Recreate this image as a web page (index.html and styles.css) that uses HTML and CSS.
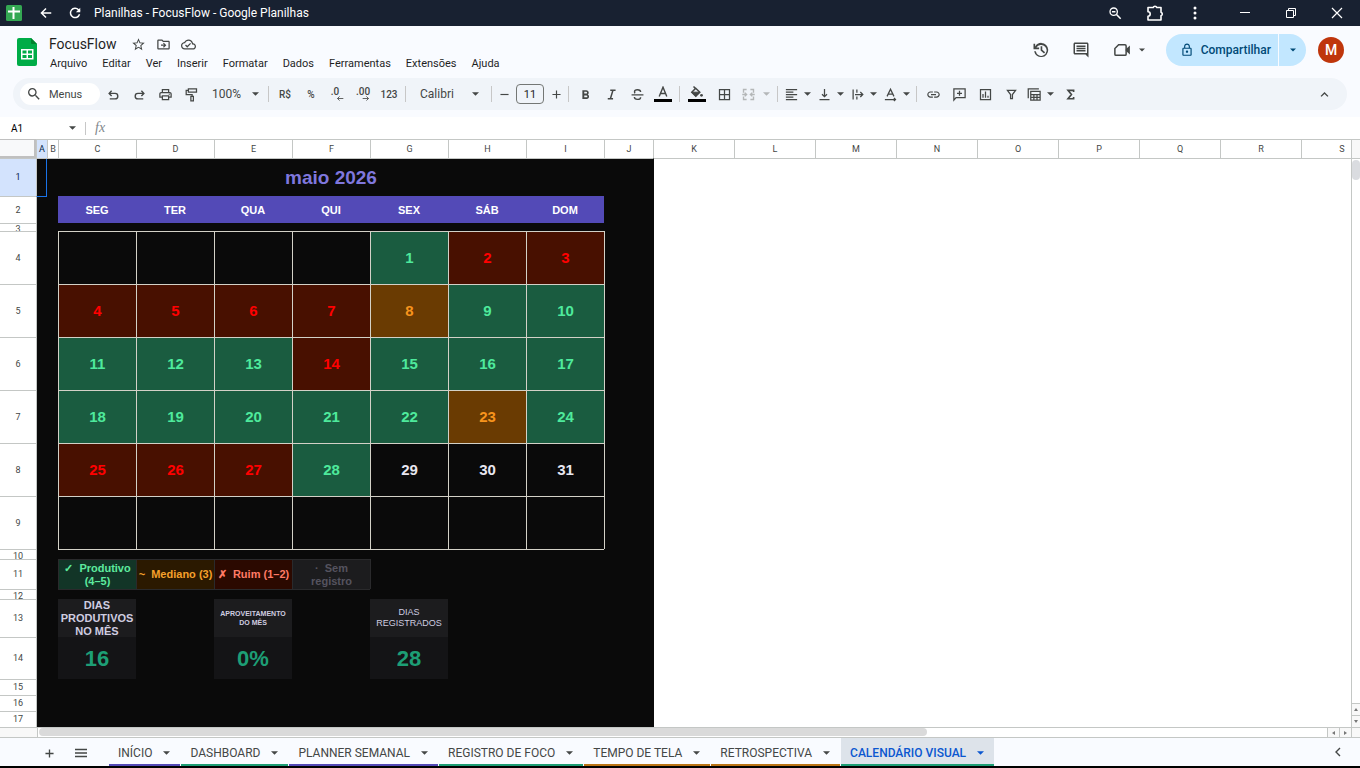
FILE: index.html
```html
<!DOCTYPE html>
<html lang="pt-BR">
<head>
<meta charset="utf-8">
<title>Planilhas - FocusFlow - Google Planilhas</title>
<link rel="stylesheet" href="styles.css">
</head>
<body>
<svg class="defs" aria-hidden="true">
  <symbol id="caret" viewBox="0 0 8 4"><path d="M0 0h8L4 4z"/></symbol>
</svg>

<header class="titlebar">
  <svg class="app-icon" viewBox="0 0 16 16"><rect width="16" height="16" rx="1.5" fill="#34a853"/><path d="M7.500 2v12M2 6.500h12" stroke="#fff" stroke-width="2"/></svg>
  <button class="win-btn" aria-label="Voltar"><svg viewBox="0 0 16 16" class="line"><path d="M14 8H3M8 2.800 2.800 8 8 13.200" stroke-width="1.700"/></svg></button>
  <button class="win-btn" aria-label="Recarregar"><svg viewBox="0 0 16 16" class="line"><path d="M13.200 9.500A5.300 5.300 0 1 1 12 4.300L13.500 6" stroke-width="1.700"/><path d="M14 2v5H9z" fill="currentColor" stroke="none"/></svg></button>
  <span class="win-title">Planilhas - FocusFlow - Google Planilhas</span>
  <div class="win-tools">
    <button class="win-tool w-zoom" aria-label="Zoom"><svg viewBox="0 0 16 16" class="line"><circle cx="6.500" cy="6.500" r="4.200" stroke-width="1.500"/><path d="M9.700 9.700 14.500 14.500M4.500 6.500h4" stroke-width="1.800"/></svg></button>
    <button class="win-tool w-ext" aria-label="Extensões"><svg viewBox="0 0 18 18" class="line"><path d="M2 3.500h5.200a1.900 1.900 0 0 1 3.600 0H15v4.700a1.900 1.900 0 0 1 0 3.600V16H2v-3.800a2.200 2.200 0 0 0 0-4.400z" stroke-width="1.600" stroke-linejoin="round"/></svg></button>
    <button class="win-tool w-more" aria-label="Mais"><svg viewBox="0 0 16 16" fill="currentColor"><circle cx="8" cy="3" r="1.500"/><circle cx="8" cy="8" r="1.500"/><circle cx="8" cy="13" r="1.500"/></svg></button>
    <button class="win-tool w-sys" aria-label="Minimizar"><svg viewBox="0 0 16 16" class="line"><path d="M3 7.500h10" stroke-width="1"/></svg></button>
    <button class="win-tool w-sys" aria-label="Restaurar"><svg viewBox="0 0 16 16" class="line"><path d="M3.500 5.500h7v7h-7zM5.500 5.500v-2h7v7h-2" stroke-width="1"/></svg></button>
    <button class="win-tool w-sys" aria-label="Fechar"><svg viewBox="0 0 16 16" class="line"><path d="M3 3l10 10M13 3 3 13" stroke-width="1.200"/></svg></button>
  </div>
</header>

<section class="doc-header">
  <svg class="doc-logo" viewBox="0 0 20 28"><path d="M2 0h12l6 6v20a2 2 0 0 1-2 2H2a2 2 0 0 1-2-2V2a2 2 0 0 1 2-2z" fill="#00ac47"/><path d="M14 0l6 6h-5a1 1 0 0 1-1-1z" fill="#00832d"/><path d="M4 11h12.500v10.500H4z" fill="#fff"/><path d="M5.500 12.500h4v3h-4zM11 12.500h4v3h-4zM5.500 17h4v3h-4zM11 17h4v3h-4z" fill="#00ac47"/></svg>
  <div class="doc-main">
    <div class="doc-title-row">
      <h1 class="doc-title">FocusFlow</h1>
      <button class="mini" aria-label="Com estrela"><svg viewBox="0 0 24 24" fill="currentColor"><path d="M22 9.240l-7.190-.62L12 2 9.190 8.630 2 9.240l5.460 4.730L5.820 21 12 17.270 18.180 21l-1.630-7.030L22 9.240zM12 15.400l-3.760 2.270 1-4.280-3.320-2.880 4.380-.38L12 6.100l1.710 4.040 4.380.38-3.320 2.880 1 4.280L12 15.400z"/></svg></button>
      <button class="mini" aria-label="Mover"><svg viewBox="0 0 24 24" fill="currentColor"><path d="M20 6h-8l-2-2H4c-1.100 0-2 .9-2 2v12c0 1.100.9 2 2 2h16c1.100 0 2-.9 2-2V8c0-1.100-.9-2-2-2zm0 12H4V6h5.200l2 2H20v10zm-7.500-9-1.300 1.300 1.800 1.700H8v2h5l-1.800 1.700 1.300 1.300 4-4z"/></svg></button>
      <button class="mini" aria-label="Salvo no Drive"><svg viewBox="0 0 24 24" fill="currentColor"><path d="M19.350 10.040C18.670 6.590 15.640 4 12 4 9.110 4 6.600 5.640 5.350 8.040 2.340 8.360 0 10.910 0 14c0 3.310 2.690 6 6 6h13c2.760 0 5-2.240 5-5 0-2.640-2.050-4.780-4.650-4.960zM19 18H6c-2.210 0-4-1.790-4-4 0-2.050 1.530-3.760 3.560-3.970l1.070-.11.500-.95C8.080 7.140 9.940 6 12 6c2.620 0 4.880 1.860 5.390 4.430l.3 1.500 1.530.11c1.560.1 2.780 1.410 2.780 2.960 0 1.650-1.350 3-3 3zm-9-3.820-2.090-2.090L6.500 13.500 10 17l6.010-6.010-1.410-1.410z"/></svg></button>
    </div>
    <nav class="menus">
      <button>Arquivo</button><button>Editar</button><button>Ver</button><button>Inserir</button><button>Formatar</button><button>Dados</button><button>Ferramentas</button><button>Extensões</button><button>Ajuda</button>
    </nav>
  </div>
  <div class="doc-actions">
    <button class="act" aria-label="Histórico"><svg viewBox="0 0 24 24" fill="currentColor"><path d="M12.500 2.500A9.500 9.500 0 0 0 4.200 7.300V3.500H2V11h7.500V8.800H5.900a7.300 7.300 0 1 1-.9 5H2.800A9.500 9.500 0 1 0 12.500 2.500zM11.500 7v5.500l4.500 4 1.500-1.600-3.800-3.400V7z"/></svg></button>
    <button class="act" aria-label="Comentários"><svg viewBox="0 0 24 24" fill="currentColor"><path d="M22 4c0-1.100-.9-2-2-2H4c-1.100 0-2 .9-2 2v12c0 1.100.9 2 2 2h14l4 4V4zm-2 12H4V4h16v12zM6 12h12v2H6zm0-3h12v2H6zm0-3h12v2H6z"/></svg></button>
    <button class="act act-meet" aria-label="Reunião"><svg viewBox="0 0 24 24" class="line"><path d="M7.500 5H16a1.500 1.500 0 0 1 1.500 1.500v11A1.500 1.500 0 0 1 16 19H4a1.500 1.500 0 0 1-1.500-1.500V10z" stroke-width="2"/><path d="M17 11l5.500-5v12L17 13z" fill="currentColor" stroke="none"/></svg><svg class="caret"><use href="#caret"/></svg></button>
    <div class="share">
      <button class="share-main"><svg viewBox="0 0 24 24" fill="currentColor"><path d="M18 8h-1V6c0-2.760-2.240-5-5-5S7 3.240 7 6v2H6c-1.100 0-2 .9-2 2v10c0 1.100.9 2 2 2h12c1.100 0 2-.9 2-2V10c0-1.100-.9-2-2-2zM9 6c0-1.660 1.340-3 3-3s3 1.340 3 3v2H9V6zm9 14H6V10h12v10zm-6-3c1.100 0 2-.9 2-2s-.9-2-2-2-2 .9-2 2 .9 2 2 2z"/></svg>Compartilhar</button>
      <button class="share-more" aria-label="Opções de compartilhamento"><svg class="caret"><use href="#caret"/></svg></button>
    </div>
    <button class="avatar">M</button>
  </div>
</section>

<section class="toolbar" role="toolbar">
  <button class="search-menus"><svg viewBox="0 0 24 24" fill="currentColor"><path d="M15.500 14h-.79l-.28-.27A6.470 6.470 0 0 0 16 9.500 6.500 6.500 0 1 0 9.500 16c1.610 0 3.090-.59 4.230-1.570l.27.28v.79l5 4.990L20.490 19l-4.990-5zm-6 0C7.010 14 5 11.990 5 9.500S7.010 5 9.500 5 14 7.010 14 9.500 11.990 14 9.500 14z"/></svg>Menus</button>
  <button class="tb" aria-label="Desfazer"><svg viewBox="0 0 24 24" class="line"><path d="M9 6 5 10.200 9 14.400M5 10.200h9.500a4.300 4.300 0 0 1 0 8.800H6" stroke-width="2.200"/></svg></button>
  <button class="tb" aria-label="Refazer"><svg viewBox="0 0 24 24" class="line"><path d="M15 6l4 4.200-4 4.200M19 10.200H9.500a4.300 4.300 0 0 0 0 8.800H18" stroke-width="2.200"/></svg></button>
  <button class="tb" aria-label="Imprimir"><svg viewBox="0 0 24 24" fill="currentColor"><path d="M19 8h-1V3H6v5H5c-1.660 0-3 1.340-3 3v6h4v4h12v-4h4v-6c0-1.660-1.340-3-3-3zM8 5h8v3H8V5zm8 14H8v-4h8v4zm2-4v-2H6v2H4v-4c0-.55.45-1 1-1h14c.55 0 1 .45 1 1v4h-2z"/><circle cx="18" cy="11.500" r="1"/></svg></button>
  <button class="tb" aria-label="Pintar formatação"><svg viewBox="0 0 24 24" class="line"><path d="M7 3h13v5H7zM7 5.500H3.500V12H13v3" stroke-width="2"/><path d="M11 15h4v7h-4z" stroke-width="2"/></svg></button>
  <button class="tb-zoom">100%<svg class="caret"><use href="#caret"/></svg></button>
  <i class="sep"></i>
  <button class="tb tb-text">R$</button>
  <button class="tb tb-text">%</button>
  <button class="tb tb-dec dec-less" aria-label="Diminuir casas decimais"><span>.0</span><svg viewBox="0 0 8 6" class="line"><path d="M8 3H1M3.500.5 1 3l2.500 2.500"/></svg></button>
  <button class="tb tb-dec" aria-label="Aumentar casas decimais"><span>.00</span><svg viewBox="0 0 8 6" class="line"><path d="M0 3h7M4.500.5 7 3 4.500 5.500"/></svg></button>
  <button class="tb tb-text">123</button>
  <i class="sep"></i>
  <button class="tb-font">Calibri<svg class="caret"><use href="#caret"/></svg></button>
  <i class="sep"></i>
  <button class="tb-step" aria-label="Diminuir fonte"><svg viewBox="0 0 10 10" class="line"><path d="M.5 5h9" stroke-width="1.300"/></svg></button>
  <input class="font-size" type="text" value="11" aria-label="Tamanho da fonte">
  <button class="tb-step" aria-label="Aumentar fonte"><svg viewBox="0 0 10 10" class="line"><path d="M.5 5h9M5 .5v9" stroke-width="1.300"/></svg></button>
  <i class="sep"></i>
  <button class="tb" aria-label="Negrito"><svg viewBox="0 0 24 24" fill="currentColor"><path d="M15.600 11.800c1-.7 1.600-1.800 1.600-2.800 0-2.300-1.700-4-4-4H7v14h7c2.100 0 3.700-1.700 3.700-3.800 0-1.500-.9-2.800-2.100-3.400zM10 7.500h3a1.500 1.500 0 0 1 0 3h-3v-3zm3.500 9H10v-3h3.500a1.500 1.500 0 0 1 0 3z"/></svg></button>
  <button class="tb" aria-label="Itálico"><svg viewBox="0 0 24 24" fill="currentColor"><path d="M10 4v2.500h2.700l-3.400 11H6V20h8.500v-2.500h-2.700l3.400-11H18.500V4z"/></svg></button>
  <button class="tb" aria-label="Tachado"><svg viewBox="0 0 24 24" class="line"><path d="M2.500 12.500h19M17 8c0-2.200-2-3.700-5-3.700S7.200 5.500 7.200 7.600c0 1 .3 1.800 1 2.400M7 16c0 2.300 2 3.800 5 3.800s5-1.400 5-3.600" stroke-width="2.200"/></svg></button>
  <button class="tb tb-color" aria-label="Cor do texto"><svg viewBox="0 0 12 12" class="line"><path d="M2.200 10.500 6 1.200l3.800 9.300M3.500 7.500h5" stroke-width="1.400"/></svg><b></b></button>
  <i class="sep"></i>
  <button class="tb tb-color tb-fill" aria-label="Cor de preenchimento"><svg viewBox="0 0 14 12" class="line"><path d="M3.500.5 5.500 2.500M5.700 2.300 1.800 6.200l4 4 4-4z" stroke-width="1.500"/><path d="M1.800 6.200h8l-4 4z" fill="currentColor"/><circle cx="11.500" cy="9.300" r="1.400" fill="currentColor" stroke="none"/></svg><b></b></button>
  <button class="tb" aria-label="Bordas"><svg viewBox="0 0 24 24" class="line"><path d="M4 4h16v16H4zM12 4v16M4 12h16" stroke-width="2"/></svg></button>
  <button class="tb-dd off" aria-label="Mesclar"><svg viewBox="0 0 24 24" class="line"><path d="M9 4H4v5M9 20H4v-5M15 4h5v5M15 20h5v-5M2 12h7M6 9l3 3-3 3M22 12h-7M18 9l-3 3 3 3" stroke-width="2.200"/></svg><svg class="caret"><use href="#caret"/></svg></button>
  <i class="sep"></i>
  <button class="tb-dd" aria-label="Alinhamento horizontal"><svg viewBox="0 0 24 24" class="line"><path d="M3 4h18M3 8h12M3 12h18M3 16h12M3 20h18" stroke-width="2"/></svg><svg class="caret"><use href="#caret"/></svg></button>
  <button class="tb-dd" aria-label="Alinhamento vertical"><svg viewBox="0 0 24 24" class="line"><path d="M12 3v12M8 11.500l4 4 4-4M4 20h16" stroke-width="2"/></svg><svg class="caret"><use href="#caret"/></svg></button>
  <button class="tb-dd" aria-label="Ajuste de texto"><svg viewBox="0 0 24 24" class="line"><path d="M5 4v16M11 4v5M11 15v5M8 12h12M16.500 8l4 4-4 4" stroke-width="2"/></svg><svg class="caret"><use href="#caret"/></svg></button>
  <button class="tb-dd" aria-label="Rotação de texto"><svg viewBox="0 0 24 24" class="line"><path d="M6.500 15 12 3.500 17.500 15M8.500 11.500h7M3 20h17M17.500 17.500 20 20l-2.500 2.500" stroke-width="2"/></svg><svg class="caret"><use href="#caret"/></svg></button>
  <i class="sep"></i>
  <button class="tb" aria-label="Inserir link"><svg viewBox="0 0 24 24" fill="currentColor"><path d="M3.900 12c0-1.710 1.390-3.100 3.100-3.100h4V7H7c-2.760 0-5 2.240-5 5s2.240 5 5 5h4v-1.900H7c-1.710 0-3.100-1.390-3.100-3.100zM8 13h8v-2H8v2zm9-6h-4v1.900h4c1.710 0 3.100 1.390 3.100 3.100s-1.390 3.100-3.100 3.100h-4V17h4c2.760 0 5-2.240 5-5s-2.240-5-5-5z"/></svg></button>
  <button class="tb" aria-label="Inserir comentário"><svg viewBox="0 0 24 24" class="line"><path d="M3 21V3h18v14H6.500zM12 6v8M8 10h8" stroke-width="2"/></svg></button>
  <button class="tb" aria-label="Inserir gráfico"><svg viewBox="0 0 24 24" class="line"><path d="M4 4h16v16H4zM8 17v-6M12 17V7M16 17v-3" stroke-width="2"/></svg></button>
  <button class="tb" aria-label="Criar filtro"><svg viewBox="0 0 24 24" class="line"><path d="M5.500 5.500h13l-5 6.500v6.500h-3V12z" stroke-width="2"/></svg></button>
  <button class="tb-dd" aria-label="Tabelas"><svg viewBox="0 0 24 24" class="line"><path d="M2 18V3h17M6 7h15v14H6zM6 12h15M6 16.500h15M11 12v9M16 12v9" stroke-width="2"/></svg><svg class="caret"><use href="#caret"/></svg></button>
  <button class="tb" aria-label="Funções"><svg viewBox="0 0 24 24" class="line"><path d="M17 8V5.300H8l5.500 6.700L8 18.700h9V16" stroke-width="2.600"/></svg></button>
  <button class="tb tb-collapse" aria-label="Ocultar menus"><svg viewBox="0 0 24 24" class="line"><path d="M6.500 15 12 9.500l5.500 5.500" stroke-width="2.200"/></svg></button>
</section>

<section class="formula">
  <button class="name-box"><span>A1</span><svg class="caret"><use href="#caret"/></svg></button>
  <i class="sep"></i>
  <label class="fx" for="fx-input">fx</label>
  <input id="fx-input" class="fx-input" type="text">
</section>

<main class="sheet">
  <div class="viewport">
    <table class="grid">
      <colgroup>
        <col class="c-head"><col class="c-thin"><col class="c-thin"><col class="c-day" span="7"><col class="c-j"><col class="c-std" span="9">
      </colgroup>
      <thead>
        <tr><td class="corner"></td><th class="sel">A</th><th>B</th><th>C</th><th>D</th><th>E</th><th>F</th><th>G</th><th>H</th><th>I</th><th>J</th><th>K</th><th>L</th><th>M</th><th>N</th><th>O</th><th>P</th><th>Q</th><th>R</th><th>S</th></tr>
      </thead>
      <tbody>
        <tr class="h-38"><th class="sel">1</th><td class="active"></td><td></td><td colspan="7" class="month">maio 2026</td><td></td><td class="blank" colspan="9"></td></tr>
        <tr class="h-27 week"><th>2</th><td class="under-active"></td><td></td><td>SEG</td><td>TER</td><td>QUA</td><td>QUI</td><td>SEX</td><td>SÁB</td><td>DOM</td><td></td><td class="blank" colspan="9"></td></tr>
        <tr class="h-8"><th><div class="clip">3</div></th><td></td><td></td><td colspan="7"></td><td></td><td class="blank" colspan="9"></td></tr>
        <tr class="h-53 days"><th>4</th><td></td><td></td><td class="d"></td><td class="d"></td><td class="d"></td><td class="d"></td><td class="d good">1</td><td class="d bad">2</td><td class="d bad">3</td><td class="edge"></td><td class="blank" colspan="9"></td></tr>
        <tr class="h-53 days"><th>5</th><td></td><td></td><td class="d bad">4</td><td class="d bad">5</td><td class="d bad">6</td><td class="d bad">7</td><td class="d mid">8</td><td class="d good">9</td><td class="d good">10</td><td class="edge"></td><td class="blank" colspan="9"></td></tr>
        <tr class="h-53 days"><th>6</th><td></td><td></td><td class="d good">11</td><td class="d good">12</td><td class="d good">13</td><td class="d bad">14</td><td class="d good">15</td><td class="d good">16</td><td class="d good">17</td><td class="edge"></td><td class="blank" colspan="9"></td></tr>
        <tr class="h-53 days"><th>7</th><td></td><td></td><td class="d good">18</td><td class="d good">19</td><td class="d good">20</td><td class="d good">21</td><td class="d good">22</td><td class="d mid">23</td><td class="d good">24</td><td class="edge"></td><td class="blank" colspan="9"></td></tr>
        <tr class="h-53 days"><th>8</th><td></td><td></td><td class="d bad">25</td><td class="d bad">26</td><td class="d bad">27</td><td class="d good">28</td><td class="d">29</td><td class="d">30</td><td class="d">31</td><td class="edge"></td><td class="blank" colspan="9"></td></tr>
        <tr class="h-53 days"><th>9</th><td></td><td></td><td class="d"></td><td class="d"></td><td class="d"></td><td class="d"></td><td class="d"></td><td class="d"></td><td class="d"></td><td class="edge"></td><td class="blank" colspan="9"></td></tr>
        <tr class="h-10"><th><div class="clip">10</div></th><td></td><td></td><td class="cal-end" colspan="7"></td><td></td><td class="blank" colspan="9"></td></tr>
        <tr class="h-30 legend"><th>11</th><td></td><td></td>
          <td class="k k-good"><div class="clip">✓&nbsp; Produtivo<br>(4–5)</div></td>
          <td class="k k-mid"><div class="clip">~&nbsp; Mediano (3)</div></td>
          <td class="k k-bad"><div class="clip">✗&nbsp; Ruim (1–2)</div></td>
          <td class="k k-none"><div class="clip">·&nbsp; Sem<br>registro</div></td>
          <td class="k-edge"></td><td></td><td></td><td></td><td class="blank" colspan="9"></td></tr>
        <tr class="h-10"><th><div class="clip">12</div></th><td></td><td></td><td class="k-end" colspan="4"></td><td colspan="4"></td><td class="blank" colspan="9"></td></tr>
        <tr class="h-38"><th>13</th><td></td><td></td>
          <td class="stat-label big"><div class="clip">DIAS PRODUTIVOS NO MÊS</div></td><td></td>
          <td class="stat-label small"><div class="clip">APROVEITAMENTO DO MÊS</div></td><td></td>
          <td class="stat-label"><div class="clip">DIAS REGISTRADOS</div></td><td></td><td></td><td></td><td class="blank" colspan="9"></td></tr>
        <tr class="h-42"><th>14</th><td></td><td></td><td class="stat">16</td><td></td><td class="stat">0%</td><td></td><td class="stat">28</td><td></td><td></td><td></td><td class="blank" colspan="9"></td></tr>
        <tr class="h-16"><th>15</th><td colspan="10"></td><td class="blank" colspan="9"></td></tr>
        <tr class="h-16"><th>16</th><td colspan="10"></td><td class="blank" colspan="9"></td></tr>
        <tr class="h-16"><th>17</th><td colspan="10"></td><td class="blank" colspan="9"></td></tr>
      </tbody>
    </table>
  </div>
  <div class="vscroll">
    <div class="v-cap"></div>
    <div class="v-track"><div class="v-thumb"></div></div>
    <button aria-label="Rolar para cima"><svg viewBox="0 0 4 3"><path d="M2 0l2 3H0z"/></svg></button>
    <button aria-label="Rolar para baixo"><svg viewBox="0 0 4 3"><path d="M0 0h4L2 3z"/></svg></button>
  </div>
  <div class="hscroll">
    <div class="h-cap"></div>
    <div class="h-track"><div class="h-thumb"></div></div>
    <button aria-label="Rolar para a esquerda"><svg viewBox="0 0 3 4"><path d="M3 0v4L0 2z"/></svg></button>
    <button aria-label="Rolar para a direita"><svg viewBox="0 0 3 4"><path d="M0 0l3 2-3 2z"/></svg></button>
  </div>
  <div class="scroll-corner"></div>
</main>

<footer class="tabs">
  <button class="tab-tool" aria-label="Adicionar página"><svg viewBox="0 0 10 10" class="line"><path d="M.5 5h9M5 .5v9" stroke-width="1.500"/></svg></button>
  <button class="tab-tool tab-list" aria-label="Todas as páginas"><svg viewBox="0 0 12 10" class="line"><path d="M0 1.500h12M0 5h12M0 8.500h12" stroke-width="1.500"/></svg></button>
  <button class="tab violet">INÍCIO<svg class="caret"><use href="#caret"/></svg></button>
  <button class="tab green">DASHBOARD<svg class="caret"><use href="#caret"/></svg></button>
  <button class="tab violet">PLANNER SEMANAL<svg class="caret"><use href="#caret"/></svg></button>
  <button class="tab green">REGISTRO DE FOCO<svg class="caret"><use href="#caret"/></svg></button>
  <button class="tab orange">TEMPO DE TELA<svg class="caret"><use href="#caret"/></svg></button>
  <button class="tab orange">RETROSPECTIVA<svg class="caret"><use href="#caret"/></svg></button>
  <button class="tab green current">CALENDÁRIO VISUAL<svg class="caret"><use href="#caret"/></svg></button>
  <button class="side-toggle" aria-label="Mostrar painel lateral"><svg viewBox="0 0 6 10" class="line"><path d="M5 1 1 5l4 4" stroke-width="1.400"/></svg></button>
</footer>
</body>
</html>
```

FILE: styles.css
```css
* { box-sizing: border-box; }

body {
  margin: 0;
  height: 100vh;
  display: flex;
  flex-direction: column;
  overflow: hidden;
  background: #f9fbff;
  border-bottom: 2px solid #000;
  font-family: Roboto, "Liberation Sans", sans-serif;
  font-size: 11px;
  color: #1f1f1f;
}

button, input {
  font: inherit;
  color: inherit;
  background: none;
  border: 0;
  padding: 0;
  margin: 0;
}

button {
  display: flex;
  align-items: center;
  justify-content: center;
  flex: none;
  white-space: nowrap;
}

svg { display: block; flex: none; }
.defs { position: absolute; width: 0; height: 0; }
.line { fill: none; stroke: currentColor; }
.caret { width: 7px; height: 4px; fill: currentColor; }
.sep { flex: none; width: 1px; height: 16px; margin: 0 3px; background: #c7c7c7; }

/* Window bar */
.titlebar {
  flex: none;
  display: flex;
  align-items: center;
  height: 26px;
  padding-left: 6px;
  background: #182131;
  color: #fff;
}
.app-icon { width: 16px; height: 16px; margin-right: 9px; }
.win-btn { width: 29px; height: 26px; }
.win-btn svg { width: 14px; height: 14px; }
.win-title { margin-left: 5px; font-size: 12px; }
.win-tools { display: flex; margin-left: auto; }
.win-tool { height: 26px; }
.win-tool svg { width: 16px; height: 16px; }
.w-zoom { width: 40px; }
.w-zoom svg { width: 14px; height: 14px; }
.w-ext { width: 40px; }
.w-ext svg { width: 18px; height: 18px; }
.w-more { width: 40px; margin-right: 7px; }
.w-sys { width: 46px; }

/* Document header */
.doc-header {
  flex: none;
  display: flex;
  height: 52px;
  padding: 8px 16px 0 17px;
}
.doc-logo { width: 20px; height: 28px; margin-top: 4px; }
.doc-main { margin-left: 6px; }
.doc-title-row { display: flex; align-items: center; height: 20px; padding-left: 6px; }
.doc-title { margin: 0 9px 0 0; font-size: 14px; font-weight: 400; line-height: 20px; }
.mini { width: 25px; color: #444746; }
.mini svg { width: 15px; height: 15px; }
.menus { display: flex; gap: 1px; height: 18px; }
.menus button { padding: 0 7px; }
.doc-actions { display: flex; align-items: center; margin-left: auto; height: 32px; color: #444746; }
.act { width: 40px; height: 32px; }
.act svg { width: 18px; height: 18px; }
.act-meet { width: 56px; margin-right: 9px; gap: 8px; }
.act .caret, .share .caret { width: 6px; height: 4px; }
.share { display: flex; gap: 1px; height: 32px; color: #004a77; }
.share button { height: 32px; background: #c2e7ff; }
.share-main { padding: 0 7px 0 14px; gap: 7px; border-radius: 16px 0 0 16px; font-size: 12px; font-weight: 500; }
.share-main svg { width: 14px; height: 14px; }
.share-more { width: 27px; border-radius: 0 16px 16px 0; }
.avatar { width: 26px; height: 26px; margin-left: 12px; border-radius: 50%; background: #bf360c; color: #fff; font-size: 14px; font-weight: 500; }

/* Toolbar */
.toolbar {
  flex: none;
  display: flex;
  align-items: center;
  height: 32px;
  margin: 0 13px 7px;
  padding: 0 10px 0 7px;
  border-radius: 16px;
  background: #f0f4f9;
  color: #444746;
}
.search-menus { width: 80px; height: 22px; padding-left: 6px; justify-content: flex-start; gap: 7px; border-radius: 11px; background: #fff; }
.search-menus svg { width: 16px; height: 16px; }
.tb { width: 26px; height: 24px; }
.tb svg, .tb-dd > svg:first-child { width: 15px; height: 15px; }
.tb-text { font-size: 10px; font-weight: 500; }
.tb-zoom { width: 61px; padding: 0 6px 0 8px; justify-content: space-between; font-size: 12px; }
.tb-dec { flex-direction: column; font-size: 10px; font-weight: 500; line-height: 9px; }
.tb-dec.tb svg { width: 8px; height: 5px; margin-left: 6px; }
.tb-dec.dec-less span { margin-right: 4px; }
.tb-font { width: 79px; padding: 0 9px 0 11px; justify-content: space-between; font-size: 12px; }
.tb-step { width: 18px; height: 24px; }
.tb-step svg { width: 9px; height: 9px; }
.font-size { width: 28px; height: 20px; margin: 0 3px; border: 1px solid #747775; border-radius: 4px; text-align: center; color: #1f1f1f; }
.tb-color { flex-direction: column; gap: 1px; }
.tb-color.tb svg { width: 12px; height: 12px; }
.tb-color b { width: 18px; height: 3px; background: #000; }
.tb-color.tb-fill { width: 28px; }
.tb-fill.tb svg { width: 14px; }
.tb-dd { width: 33px; height: 24px; gap: 5px; }
.off { width: 37px; gap: 7px; color: #b4b7b8; }
.tb-collapse { margin-left: auto; }

/* Formula bar */
.formula { flex: none; display: flex; align-items: center; height: 22px; background: #fff; }
.name-box { width: 82px; height: 22px; padding: 0 6px 0 11px; justify-content: space-between; font-size: 10px; color: #000; }
.name-box .caret { color: #444746; }
.formula .sep { height: 13px; }
.fx { margin-left: 6px; font-family: "Liberation Serif", serif; font-style: italic; font-size: 14px; color: #80868b; }
.fx-input { flex: 1; height: 22px; margin-left: 8px; }

/* Sheet */
.sheet {
  flex: 1;
  min-height: 0;
  display: grid;
  grid-template-columns: minmax(0, 1fr) 9px;
  grid-template-rows: minmax(0, 1fr) 11px;
  background: #fff;
}
.viewport { overflow: hidden; }
.grid { table-layout: fixed; width: 1382px; border-spacing: 0; border-collapse: separate; }
.c-head { width: 36px; }
.c-thin { width: 11px; }
.c-day { width: 78px; }
.c-j { width: 49px; }
.c-std { width: 81px; }
.grid th, .grid td { padding: 0; text-align: center; vertical-align: middle; background: #0a0a0a; }
.grid th { font-weight: 400; font-size: 9px; line-height: 9px; background: #fff; color: #444746; border-top: 1px solid #c4c7c5; }
.grid thead th { height: 19px; border-left: 1px solid #c4c7c5; }
.grid th.sel { background: #d3e3fd; color: #041e49; }
.grid .corner { background: #f8f9fa; border: solid #c0c0c0; border-width: 1px 2px 2px 0; }
.grid tbody td:nth-child(2) { border-left: 1px solid #c4c7c5; }
.grid tbody .blank { background: #fff; border-left: 1px solid #0a0a0a; }
.grid tbody tr:first-child td { border-top: 1px solid #c4c7c5; }
.grid .active { box-shadow: inset -1px 0 #1a73e8; }
.grid .under-active { border-top: 1px solid #1a73e8; }
.clip { display: flex; align-items: center; justify-content: center; overflow: hidden; }

.h-8 { height: 8px; }
.h-8 .clip { height: 7px; padding-top: 4px; }
.h-10 { height: 10px; }
.h-10 .clip { height: 9px; padding-top: 3px; }
.h-16 { height: 16px; }
.h-27 { height: 27px; }
.h-30 { height: 30px; }
.h-30 .clip { height: 29px; }
.h-38 { height: 38px; }
.h-38 .clip { height: 38px; }
.h-42 { height: 42px; }
.h-53 { height: 53px; }

.grid td { font-family: "Liberation Sans", Arial, sans-serif; }
.grid .month { font-size: 19px; font-weight: 700; line-height: 22px; color: #7f77dd; }
.week td:nth-child(n+4):nth-child(-n+10) { background: #534ab7; color: #fff; font-size: 11px; font-weight: 700; }
.grid .d { padding-bottom: 2px; border: solid #d3d1c7; border-width: 1px 0 0 1px; font-size: 15px; font-weight: 700; color: #e8e6f0; }
.grid .good { background: #1a5c40; color: #4eea9c; }
.grid .bad { background: #481000; color: #f00; }
.grid .mid { background: #6a3b02; color: #f7941d; }
.grid .edge { border-left: 1px solid #d3d1c7; }
.grid .cal-end { border-top: 1px solid #d3d1c7; }

.grid .k { border: solid #2a2a2c; border-width: 1px 0 0 1px; font-size: 11px; font-weight: 700; line-height: 13px; white-space: nowrap; }
.grid .k-good { background: #123527; color: #5dea9e; }
.grid .k-mid { background: #2b1900; color: #f5a02b; }
.grid .k-bad { background: #2b0900; color: #ff7a66; }
.grid .k-none { background: #1c1c1e; color: #55535f; }
.grid .k-edge { border-left: 1px solid #2a2a2c; }
.grid .k-end { border-top: 1px solid #2a2a2c; }

.grid .stat-label { background: #1c1c1e; color: #cfcde0; font-size: 9px; line-height: 11px; }
.grid .big { font-size: 11px; font-weight: 700; line-height: 13px; }
.grid .small { padding: 0 4px; font-size: 7px; font-weight: 700; line-height: 9px; }
.grid .stat { padding-top: 2px; background: #141416; color: #1d9e75; font-size: 22px; font-weight: 700; line-height: 24px; }

/* Scroll bars */
.vscroll { display: flex; flex-direction: column; border-left: 1px solid #c4c7c5; }
.v-cap { height: 20px; background: #f8f8f8; border: solid #c4c7c5; border-width: 1px 0; }
.v-track { flex: 1; padding-top: 1px; }
.v-thumb { height: 20px; border-radius: 4px; background: #dadce0; }
.vscroll button { width: 8px; height: 12px; background: #f8f8f8; border-top: 1px solid #c4c7c5; }
.vscroll svg { width: 4px; height: 3px; fill: #777; }
.hscroll { display: flex; border: solid #c4c7c5; border-width: 1px 0; }
.h-cap { width: 38px; background: #f8f8f8; border-right: 1px solid #c4c7c5; }
.h-track { flex: 1; padding: 0 1px; }
.h-thumb { width: 69%; height: 8px; border-radius: 4px; background: #dadada; }
.hscroll button { width: 12px; height: 9px; background: #f8f8f8; border-left: 1px solid #c4c7c5; }
.hscroll svg { width: 3px; height: 4px; fill: #777; }
.scroll-corner { background: #f8f8f8; border: 1px solid #c4c7c5; border-right: 0; }

/* Sheet tabs */
.tabs { flex: none; display: flex; height: 28px; padding-left: 33px; color: #444746; }
.tab-tool { width: 32px; height: 28px; padding-top: 2px; }
.tab-tool svg { width: 9px; height: 9px; }
.tab-list { margin-right: 11px; }
.tab-list svg { width: 12px; height: 10px; }
.tab { height: 28px; margin-left: 1px; padding: 4px 10px 0 9px; gap: 11px; font-size: 12px; border-bottom: 2px solid; }
.violet { border-color: #534ab7; }
.green { border-color: #1d9e75; }
.orange { border-color: #ba7517; }
.current { background: #dde3ea; color: #0b57d0; font-weight: 500; }
.current .caret { fill: #0b57d0; }
.side-toggle { width: 24px; height: 28px; margin: 0 10px 0 auto; }
.side-toggle svg { width: 6px; height: 10px; }
```
